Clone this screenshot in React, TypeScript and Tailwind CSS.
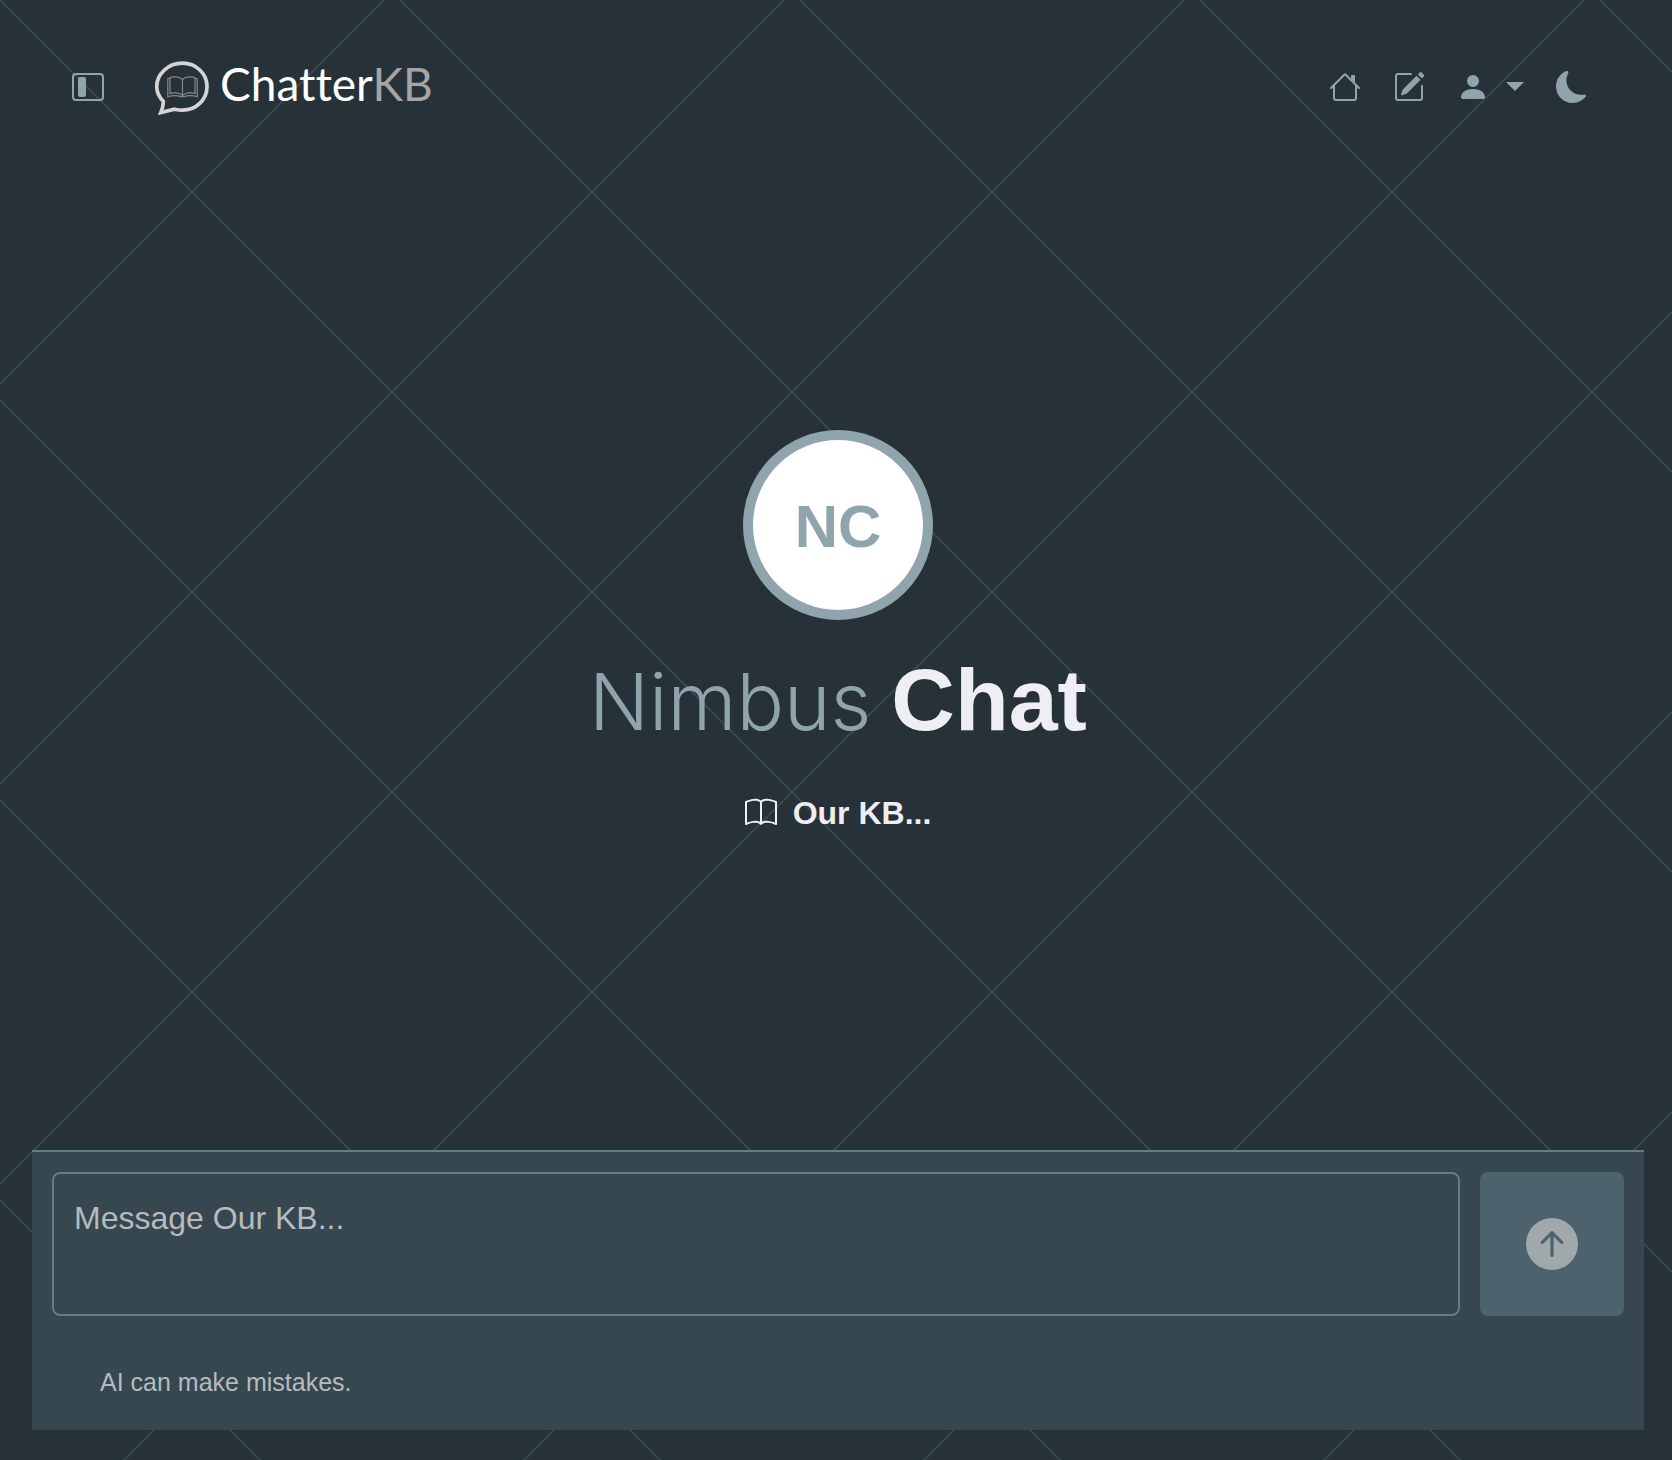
import React from "react";
import {
  BsArrowUpCircleFill,
  BsBook,
  BsLayoutSidebarInset,
  BsMoonFill,
  BsPencilSquare,
  BsPersonFill,
} from "react-icons/bs";

function Lattice() {
  return (
    <svg className="pointer-events-none absolute inset-0 h-full w-full" aria-hidden="true">
      <defs>
        <pattern id="lattice" width="400" height="400" patternUnits="userSpaceOnUse">
          <path
            d="M-10 -10L410 410M-10 394L394 -10M374 410L410 374M390 -10L410 10M-10 390L10 410"
            stroke="#37474f"
            strokeWidth="2"
            fill="none"
          />
        </pattern>
      </defs>
      <rect width="100%" height="100%" fill="url(#lattice)" />
    </svg>
  );
}

function HouseIcon() {
  return (
    <svg viewBox="0 0 16 16" className="size-8" fill="currentColor" aria-hidden="true">
      <path
        fillRule="evenodd"
        d="M2 13.5V7h1v6.5a.5.5 0 0 0 .5.5h9a.5.5 0 0 0 .5-.5V7h1v6.5a1.5 1.5 0 0 1-1.5 1.5h-9A1.5 1.5 0 0 1 2 13.5zm11-11V6l-2-2V2.5a.5.5 0 0 1 .5-.5h1a.5.5 0 0 1 .5.5z"
      />
      <path d="M7.293 1.5a1 1 0 0 1 1.414 0l6.647 6.646a.5.5 0 0 1-.708.708L8 2.207 1.354 8.854a.5.5 0 1 1-.708-.708L7.293 1.5z" />
    </svg>
  );
}

function LogoMark() {
  return (
    <svg viewBox="0 -1 56 56" className="size-14" fill="none" aria-hidden="true">
      <path
        d="M28.5 3.2C42 3.2 53 13.6 53 26.5S42.5 50.2 28.5 50.2C25.5 50.2 23 49.8 20.5 49.2L6.8 52.6C8.6 48.2 9.6 44.5 9.2 41.2C5.6 37.500 2.7 33.200 2.7 26.500C2.7 13.600 14.500 3.200 28.500 3.200Z"
        stroke="#d4d4d4"
        strokeWidth="3.7"
      />
      <g stroke="#858889" strokeWidth="1.2">
        <path d="M28.5 19.5C25.5 16.4 19.5 16.4 16 17.6V33.5C19.5 32.3 25.5 32.5 28.5 35.5C31.5 32.5 37.5 32.3 41 33.5V17.6C37.5 16.4 31.5 16.4 28.5 19.5V35.5" />
        <path d="M16 18.5H13.8V36.8C18 35.4 23.5 35.4 27 36.6H30C33.5 35.4 39 35.4 43.2 36.8V18.5H41" />
      </g>
    </svg>
  );
}

export default function App() {
  return (
    <div className="relative flex min-h-screen flex-col bg-[#263238] pt-[58px] pr-7 pb-[30px] pl-8 font-['Liberation_Sans',Arial,sans-serif] text-[#eeeef3]">
      <Lattice />

      <header className="relative flex h-[58px] items-center justify-between pr-14 pl-10 text-[#90a4ae]">
        <div className="flex items-center">
          <button type="button" aria-label="Toggle sidebar" className="mr-[50px]">
            <BsLayoutSidebarInset className="size-8" />
          </button>
          <a href="#" className="flex items-center gap-2.5 font-['Lato',sans-serif] text-[46px] leading-[52px] [font-variant-ligatures:none]">
            <LogoMark />
            <span className="pb-1.5 text-white">
              Chatter<span className="text-[#a5a5a5]">KB</span>
            </span>
          </a>
        </div>
        <nav className="flex items-center gap-8">
          <a href="#" aria-label="Home">
            <HouseIcon />
          </a>
          <a href="#" aria-label="New chat">
            <BsPencilSquare className="size-8" />
          </a>
          <button type="button" aria-label="Account" className="flex items-center gap-4">
            <BsPersonFill className="size-8" />
            <svg viewBox="0 0 19 10" className="h-2.5 w-[19px]" fill="currentColor" aria-hidden="true">
              <path d="M1 0H19L10 9Z" />
            </svg>
          </button>
          <button type="button" aria-label="Dark mode">
            <BsMoonFill className="size-8" />
          </button>
        </nav>
      </header>

      <main className="relative flex flex-1 flex-col items-center justify-center pb-1">
        <div className="flex size-[190px] items-center justify-center rounded-full border-10 border-[#90a4ae] bg-white pt-1 text-[60px] font-bold text-[#90a4ae]">
          NC
        </div>
        <h1 className="mt-7 flex items-baseline gap-5 text-[88px] leading-[104px]">
          <span className="font-['Inter',sans-serif] text-[79px] font-light text-[#90a4ae]">Nimbus</span>
          <span className="font-bold">Chat</span>
        </h1>
        <p className="mt-10 flex items-center gap-4 text-[32px] leading-10 font-bold">
          <BsBook className="size-8" />
          Our KB...
        </p>
      </main>

      <form
        className="relative border-t-2 border-[#607d8b] bg-[#37474f] p-5 pb-7"
        onSubmit={(event) => event.preventDefault()}
      >
        <div className="flex gap-5">
          <textarea
            aria-label="Message"
            placeholder="Message Our KB..."
            className="h-36 flex-1 resize-none rounded-lg border-2 border-[#607d8b] bg-transparent px-5 py-6 text-[32px] leading-10 outline-none placeholder:text-[#b5bbbe]"
          />
          <button
            type="submit"
            aria-label="Send"
            className="flex size-36 items-center justify-center rounded-lg bg-[#4c626d] text-[#a1a8ab]"
          >
            <BsArrowUpCircleFill className="size-[52px]" />
          </button>
        </div>
        <p className="mt-[46px] px-12 text-[25px] leading-10 text-[#b5bbbe]">AI can make mistakes.</p>
      </form>
    </div>
  );
}
